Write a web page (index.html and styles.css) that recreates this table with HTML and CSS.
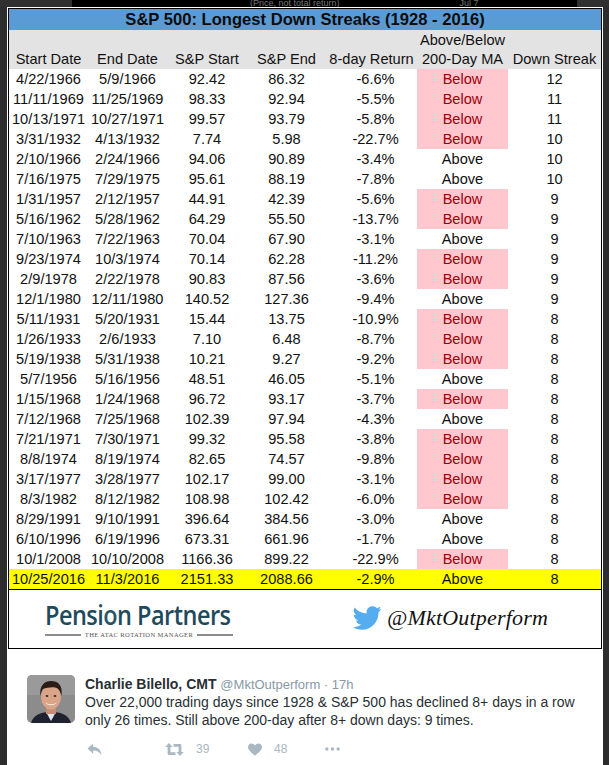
FILE: index.html
```html
<!DOCTYPE html>
<html>
<head>
<meta charset="utf-8">
<link rel="stylesheet" href="styles.css">
</head>
<body>
<div class="top"><div class="prev"><span class="prev-a">(Price, not total return)</span><span class="prev-b">Jul 7</span></div></div>
<div class="card">
  <div class="sheet">
    <div class="title">S&amp;P 500: Longest Down Streaks (1928 - 2016)</div>
    <div class="row head">
      <div>Start Date</div><div>End Date</div><div>S&amp;P Start</div><div>S&amp;P End</div><div>8-day Return</div><div>Above/Below<br>200-Day MA</div><div>Down Streak</div>
    </div>
    <div class="row"><div>4/22/1966</div><div>5/9/1966</div><div>92.42</div><div>86.32</div><div class="ret">-6.6%</div><div class="below">Below</div><div>12</div></div>
    <div class="row"><div>11/11/1969</div><div>11/25/1969</div><div>98.33</div><div>92.94</div><div class="ret">-5.5%</div><div class="below">Below</div><div>11</div></div>
    <div class="row"><div>10/13/1971</div><div>10/27/1971</div><div>99.57</div><div>93.79</div><div class="ret">-5.8%</div><div class="below">Below</div><div>11</div></div>
    <div class="row"><div>3/31/1932</div><div>4/13/1932</div><div>7.74</div><div>5.98</div><div class="ret">-22.7%</div><div class="below">Below</div><div>10</div></div>
    <div class="row"><div>2/10/1966</div><div>2/24/1966</div><div>94.06</div><div>90.89</div><div class="ret">-3.4%</div><div>Above</div><div>10</div></div>
    <div class="row"><div>7/16/1975</div><div>7/29/1975</div><div>95.61</div><div>88.19</div><div class="ret">-7.8%</div><div>Above</div><div>10</div></div>
    <div class="row"><div>1/31/1957</div><div>2/12/1957</div><div>44.91</div><div>42.39</div><div class="ret">-5.6%</div><div class="below">Below</div><div>9</div></div>
    <div class="row"><div>5/16/1962</div><div>5/28/1962</div><div>64.29</div><div>55.50</div><div class="ret">-13.7%</div><div class="below">Below</div><div>9</div></div>
    <div class="row"><div>7/10/1963</div><div>7/22/1963</div><div>70.04</div><div>67.90</div><div class="ret">-3.1%</div><div>Above</div><div>9</div></div>
    <div class="row"><div>9/23/1974</div><div>10/3/1974</div><div>70.14</div><div>62.28</div><div class="ret">-11.2%</div><div class="below">Below</div><div>9</div></div>
    <div class="row"><div>2/9/1978</div><div>2/22/1978</div><div>90.83</div><div>87.56</div><div class="ret">-3.6%</div><div class="below">Below</div><div>9</div></div>
    <div class="row"><div>12/1/1980</div><div>12/11/1980</div><div>140.52</div><div>127.36</div><div class="ret">-9.4%</div><div>Above</div><div>9</div></div>
    <div class="row"><div>5/11/1931</div><div>5/20/1931</div><div>15.44</div><div>13.75</div><div class="ret">-10.9%</div><div class="below">Below</div><div>8</div></div>
    <div class="row"><div>1/26/1933</div><div>2/6/1933</div><div>7.10</div><div>6.48</div><div class="ret">-8.7%</div><div class="below">Below</div><div>8</div></div>
    <div class="row"><div>5/19/1938</div><div>5/31/1938</div><div>10.21</div><div>9.27</div><div class="ret">-9.2%</div><div class="below">Below</div><div>8</div></div>
    <div class="row"><div>5/7/1956</div><div>5/16/1956</div><div>48.51</div><div>46.05</div><div class="ret">-5.1%</div><div>Above</div><div>8</div></div>
    <div class="row"><div>1/15/1968</div><div>1/24/1968</div><div>96.72</div><div>93.17</div><div class="ret">-3.7%</div><div class="below">Below</div><div>8</div></div>
    <div class="row"><div>7/12/1968</div><div>7/25/1968</div><div>102.39</div><div>97.94</div><div class="ret">-4.3%</div><div>Above</div><div>8</div></div>
    <div class="row"><div>7/21/1971</div><div>7/30/1971</div><div>99.32</div><div>95.58</div><div class="ret">-3.8%</div><div class="below">Below</div><div>8</div></div>
    <div class="row"><div>8/8/1974</div><div>8/19/1974</div><div>82.65</div><div>74.57</div><div class="ret">-9.8%</div><div class="below">Below</div><div>8</div></div>
    <div class="row"><div>3/17/1977</div><div>3/28/1977</div><div>102.17</div><div>99.00</div><div class="ret">-3.1%</div><div class="below">Below</div><div>8</div></div>
    <div class="row"><div>8/3/1982</div><div>8/12/1982</div><div>108.98</div><div>102.42</div><div class="ret">-6.0%</div><div class="below">Below</div><div>8</div></div>
    <div class="row"><div>8/29/1991</div><div>9/10/1991</div><div>396.64</div><div>384.56</div><div class="ret">-3.0%</div><div>Above</div><div>8</div></div>
    <div class="row"><div>6/10/1996</div><div>6/19/1996</div><div>673.31</div><div>661.96</div><div class="ret">-1.7%</div><div>Above</div><div>8</div></div>
    <div class="row"><div>10/1/2008</div><div>10/10/2008</div><div>1166.36</div><div>899.22</div><div class="ret">-22.9%</div><div class="below">Below</div><div>8</div></div>
    <div class="row hl"><div>10/25/2016</div><div>11/3/2016</div><div>2151.33</div><div>2088.66</div><div class="ret">-2.9%</div><div>Above</div><div>8</div></div>
    <div class="foot">
      <div class="pp">
        <div class="pp-name">Pensi<span class="pp-o">o</span>n Partners</div>
        <div class="pp-sub"><span class="pp-line"></span><span class="pp-tag">THE ATAC ROTATION MANAGER</span><span class="pp-line"></span></div>
      </div>
      <div class="tw">
        <svg class="bird" viewBox="0 0 24 20" width="30" height="24"><path fill="#55acee" d="M23.954 2.569c-.885.389-1.830.654-2.825.775 1.014-.611 1.794-1.574 2.163-2.723-.951.555-2.005.959-3.127 1.184-.896-.959-2.173-1.559-3.591-1.559-2.717 0-4.920 2.203-4.920 4.917 0 .39.045.765.127 1.124C7.691 6.094 4.066 4.13 1.64 1.161c-.427.722-.666 1.561-.666 2.475 0 1.71.87 3.213 2.188 4.096-.807-.026-1.566-.248-2.228-.616v.061c0 2.385 1.693 4.374 3.946 4.827-.413.111-.849.171-1.296.171-.314 0-.615-.03-.916-.086.631 1.953 2.445 3.377 4.604 3.417-1.68 1.319-3.809 2.105-6.102 2.105-.39 0-.779-.023-1.17-.067 2.189 1.394 4.768 2.209 7.557 2.209 9.054 0 13.999-7.496 13.999-13.986 0-.209 0-.42-.015-.63.961-.689 1.8-1.56 2.46-2.548z"/></svg>
        <span class="tw-handle">@MktOutperform</span>
      </div>
    </div>
  </div>
  <div class="tweet">
    <svg class="avatar" viewBox="0 0 48 48" width="48" height="48">
      <rect width="48" height="48" fill="#8c8c8c"/>
      <rect x="0" y="0" width="48" height="20" fill="#9a9a9a"/>
      <path d="M4 48 C6 40 14 37 24 37 C34 37 42 40 44 48 Z" fill="#1f2330"/>
      <path d="M19 37 L24 46 L29 37 Z" fill="#dfe3ea"/>
      <rect x="19" y="30" width="10" height="9" fill="#c48f74"/>
      <ellipse cx="24" cy="22" rx="10" ry="12.5" fill="#d9a487"/>
      <path d="M13.5 21 C12 10 18 6 24 6 C31 6 36 10 34.5 21 C33 15 31 13 28 12.5 C24 12 19 13 16 14 C14.5 16 14 18 13.5 21 Z" fill="#2a1c16"/>
      <path d="M18.5 27.5 C21 30 27 30 29.5 27.5 C28 31 20 31 18.5 27.5 Z" fill="#ffffff"/>
      <ellipse cx="20" cy="21" rx="1.4" ry="1" fill="#3a2a22"/>
      <ellipse cx="28" cy="21" rx="1.4" ry="1" fill="#3a2a22"/>
    </svg>
    <div class="tw-body">
      <div class="tw-head"><span class="tw-name">Charlie Bilello, CMT</span> <span class="tw-meta">@MktOutperform · 17h</span></div>
      <div class="tw-text">Over 22,000 trading days since 1928 &amp; S&amp;P 500 has declined 8+ days in a row only 26 times. Still above 200-day after 8+ down days: 9 times.</div>
      <div class="tw-actions">
        <span class="act act-reply"><svg viewBox="0 0 16 14" width="15" height="13"><path fill="#aab8c2" d="M6.5 0.5 L0.5 6 L6.5 11.5 L6.5 8 C10 7.8 13 9 15.5 13 C15 7.5 12 4.2 6.5 4 Z"/></svg></span>
        <span class="act act-rt"><svg viewBox="0 0 20 14" width="19" height="13"><path fill="#aab8c2" d="M4 0 L8 4.2 L5.6 4.2 L5.6 10 L11 10 L11 13 L4.2 13 C3.2 13 2.6 12.4 2.6 11.4 L2.6 4.2 L0 4.2 Z M16 14 L12 9.8 L14.4 9.8 L14.4 4 L9 4 L9 1 L15.8 1 C16.8 1 17.4 1.6 17.4 2.6 L17.4 9.8 L20 9.8 Z"/></svg><span class="cnt">39</span></span>
        <span class="act act-like"><svg viewBox="0 0 16 14" width="14" height="13"><path fill="#aab8c2" d="M8 14 C3 10 0 7.5 0 4.2 C0 1.8 1.8 0 4 0 C5.8 0 7.2 1 8 2.4 C8.8 1 10.2 0 12 0 C14.2 0 16 1.8 16 4.2 C16 7.5 13 10 8 14 Z"/></svg><span class="cnt">48</span></span>
        <span class="act act-more"><svg viewBox="0 0 16 4" width="15" height="4"><circle cx="2" cy="2" r="1.8" fill="#aab8c2"/><circle cx="8" cy="2" r="1.8" fill="#aab8c2"/><circle cx="14" cy="2" r="1.8" fill="#aab8c2"/></svg></span>
      </div>
    </div>
  </div>
</div>
</body>
</html>
```
FILE: styles.css
```css
html, body {
  margin: 0;
  padding: 0;
}
body {
  background: #2d2d2d;
  width: 609px;
  height: 765px;
  overflow: hidden;
  font-family: "Liberation Sans", Arial, sans-serif;
}
.top {
  height: 7px;
  padding-left: 72px;
  padding-right: 32px;
  background: #303030;
}
.prev {
  height: 7px;
  background: #000;
  overflow: hidden;
  display: flex;
  color: #777;
  font-size: 9px;
  line-height: 7px;
}
.prev-a { margin-left: 178px; }
.prev-b { margin-left: 120px; }
.card {
  margin-left: 7px;
  width: 596px;
  height: 758px;
  background: #fff;
  padding-top: 1px;
  box-sizing: border-box;
}
.sheet {
  margin-left: 1px;
  width: 594px;
  border: 1px solid #000;
  box-sizing: border-box;
  color: #111;
  font-size: 14.6px;
}
.title {
  height: 21px;
  background: #5b9bd5;
  text-align: center;
  font-weight: bold;
  font-size: 16.6px;
  line-height: 21px;
  color: #0d0d0d;
}
.row {
  display: grid;
  grid-template-columns: 79px 79px 80px 79px 91px 91px 93px;
  height: 20px;
  line-height: 20px;
  text-align: center;
  white-space: nowrap;
}
.row .ret {
  padding-left: 8px;
}
.head {
  height: 39px;
  background: #e3e3e3;
  line-height: 19px;
  align-items: end;
}
.head .ret { padding-left: 0; }
.below {
  background: #ffc7ce;
  color: #9c0006;
}
.hl {
  background: #ffff00;
}
.foot {
  border-top: 1px solid #000;
  height: 58px;
  display: flex;
  align-items: flex-start;
}
.pp {
  margin-left: 36px;
  margin-top: 13px;
  width: 188px;
}
.pp-name {
  font-family: "Open Sans", "Noto Sans", sans-serif;
  font-weight: 600;
  color: #1f4a5b;
  font-size: 27px;
  line-height: 24px;
  height: 24px;
  letter-spacing: -0.6px;
  white-space: nowrap;
  transform: scaleX(0.87);
  transform-origin: left center;
}
.pp-o {
  position: relative;
  color: #2b5566;
}
.pp-o::after {
  content: "";
  position: absolute;
  left: 8px;
  top: 6px;
  width: 5px;
  height: 5px;
  background: #fff;
}
.pp-sub {
  display: flex;
  align-items: center;
  margin-top: 4px;
  gap: 4px;
  height: 8px;
}
.pp-line {
  flex: 1;
  height: 2px;
  background: #8c8c8c;
}
.pp-tag {
  font-family: "Liberation Serif", serif;
  font-size: 6.5px;
  line-height: 8px;
  color: #555;
  letter-spacing: 0.4px;
}
.tw {
  margin-left: 119px;
  margin-top: 16px;
  display: flex;
  align-items: center;
}
.bird {
  display: block;
}
.tw-handle {
  margin-left: 5px;
  font-family: "Liberation Serif", serif;
  font-style: italic;
  font-size: 22px;
  line-height: 24px;
  color: #111;
  letter-spacing: 0.2px;
}
.tweet {
  display: flex;
  margin-top: 26px;
  padding-left: 20px;
}
.avatar {
  display: block;
  border-radius: 5px;
  flex: none;
}
.tw-body {
  margin-left: 10px;
}
.tw-head {
  font-size: 14px;
  line-height: 18px;
}
.tw-name {
  font-weight: bold;
  color: #292f33;
}
.tw-meta {
  color: #8899a6;
  font-size: 13px;
}
.tw-text {
  color: #292f33;
  font-size: 14px;
  line-height: 17.5px;
  width: 510px;
}
.tw-actions {
  display: flex;
  align-items: center;
  margin-top: 12px;
  height: 16px;
  color: #aab8c2;
  font-size: 12px;
}
.act {
  display: flex;
  align-items: center;
}
.act svg { display: block; }
.act-reply { margin-left: 2px; width: 78px; }
.act-rt { width: 83px; }
.act-like { width: 77px; }
.cnt { margin-left: 12px; }
```
